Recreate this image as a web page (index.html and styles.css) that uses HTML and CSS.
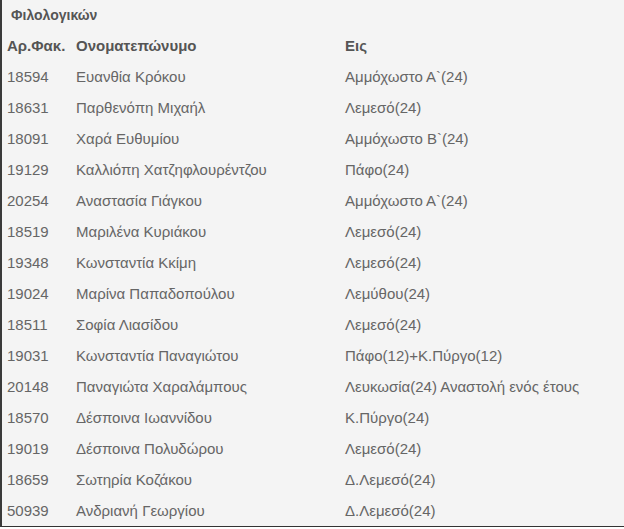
FILE: index.html
```html
<!DOCTYPE html>
<html lang="el">
<head>
<meta charset="utf-8">
<link rel="stylesheet" href="styles.css">
</head>
<body>
<div class="panel">
  <div class="title">Φιλολογικών</div>
  <table class="list">
    <thead>
      <tr><th class="c1">Αρ.Φακ.</th><th class="c2">Ονοματεπώνυμο</th><th class="c3">Εις</th></tr>
    </thead>
    <tbody>
      <tr><td>18594</td><td>Ευανθία Κρόκου</td><td>Αμμόχωστο Α`(24)</td></tr>
      <tr><td>18631</td><td>Παρθενόπη Μιχαήλ</td><td>Λεμεσό(24)</td></tr>
      <tr><td>18091</td><td>Χαρά Ευθυμίου</td><td>Αμμόχωστο Β`(24)</td></tr>
      <tr><td>19129</td><td>Καλλιόπη Χατζηφλουρέντζου</td><td>Πάφο(24)</td></tr>
      <tr><td>20254</td><td>Αναστασία Γιάγκου</td><td>Αμμόχωστο Α`(24)</td></tr>
      <tr><td>18519</td><td>Μαριλένα Κυριάκου</td><td>Λεμεσό(24)</td></tr>
      <tr><td>19348</td><td>Κωνσταντία Κκίμη</td><td>Λεμεσό(24)</td></tr>
      <tr><td>19024</td><td>Μαρίνα Παπαδοπούλου</td><td>Λεμύθου(24)</td></tr>
      <tr><td>18511</td><td>Σοφία Λιασίδου</td><td>Λεμεσό(24)</td></tr>
      <tr><td>19031</td><td>Κωνσταντία Παναγιώτου</td><td>Πάφο(12)+Κ.Πύργο(12)</td></tr>
      <tr><td>20148</td><td>Παναγιώτα Χαραλάμπους</td><td>Λευκωσία(24) Αναστολή ενός έτους</td></tr>
      <tr><td>18570</td><td>Δέσποινα Ιωαννίδου</td><td>Κ.Πύργο(24)</td></tr>
      <tr><td>19019</td><td>Δέσποινα Πολυδώρου</td><td>Λεμεσό(24)</td></tr>
      <tr><td>18659</td><td>Σωτηρία Κοζάκου</td><td>Δ.Λεμεσό(24)</td></tr>
      <tr><td>50939</td><td>Ανδριανή Γεωργίου</td><td>Δ.Λεμεσό(24)</td></tr>
    </tbody>
  </table>
</div>
</body>
</html>
```
FILE: styles.css
```css
html, body {
  margin: 0;
  padding: 0;
  background: #ffffff;
}
body {
  font-family: "Liberation Sans", Arial, sans-serif;
  color: #555555;
}
.panel {
  width: 100%;
  height: 527px;
  box-sizing: border-box;
  background: #f4f4f4;
  border-left: 2px solid #3a3a3a;
  border-bottom: 1px solid #333333;
  overflow: hidden;
}
.title {
  font-size: 14px;
  font-weight: bold;
  line-height: 17px;
  padding: 7px 0 6px 9px;
  color: #555555;
}
.list {
  border-collapse: collapse;
  font-size: 15px;
}
.list th, .list td {
  text-align: left;
  line-height: 17px;
  padding: 7px 5px 7px 5px;
  white-space: nowrap;
  vertical-align: middle;
}
.list th {
  font-weight: bold;
  color: #555555;
}
.list td {
  color: #666666;
}
.c1 { width: 59px; }
.c2 { width: 259px; }
```
